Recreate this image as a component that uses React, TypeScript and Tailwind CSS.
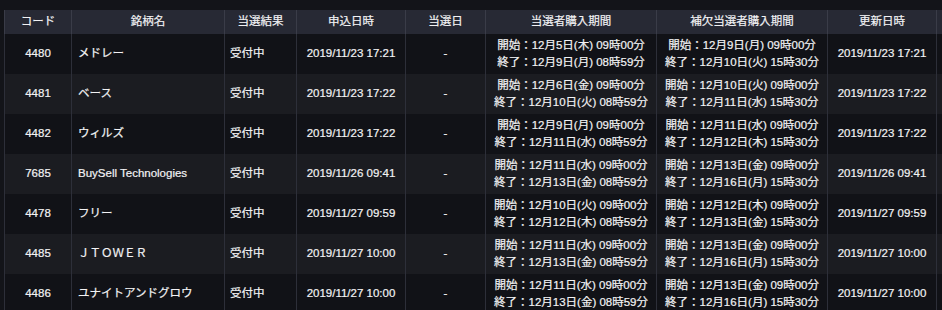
import React from 'react';

type Row = {
  code: string;
  name: string;
  status: string;
  applied: string;
  winDate: string;
  buy: [string, string];
  sub: [string, string];
  updated: string;
};

const rows: Row[] = [
  { code: '4480', name: 'メドレー', status: '受付中', applied: '2019/11/23 17:21', winDate: '-', buy: ['開始：12月5日(木) 09時00分', '終了：12月9日(月) 08時59分'], sub: ['開始：12月9日(月) 09時00分', '終了：12月10日(火) 15時30分'], updated: '2019/11/23 17:21' },
  { code: '4481', name: 'ベース', status: '受付中', applied: '2019/11/23 17:22', winDate: '-', buy: ['開始：12月6日(金) 09時00分', '終了：12月10日(火) 08時59分'], sub: ['開始：12月10日(火) 09時00分', '終了：12月11日(水) 15時30分'], updated: '2019/11/23 17:22' },
  { code: '4482', name: 'ウィルズ', status: '受付中', applied: '2019/11/23 17:22', winDate: '-', buy: ['開始：12月9日(月) 09時00分', '終了：12月11日(水) 08時59分'], sub: ['開始：12月11日(水) 09時00分', '終了：12月12日(木) 15時30分'], updated: '2019/11/23 17:22' },
  { code: '7685', name: 'BuySell Technologies', status: '受付中', applied: '2019/11/26 09:41', winDate: '-', buy: ['開始：12月11日(水) 09時00分', '終了：12月13日(金) 08時59分'], sub: ['開始：12月13日(金) 09時00分', '終了：12月16日(月) 15時30分'], updated: '2019/11/26 09:41' },
  { code: '4478', name: 'フリー', status: '受付中', applied: '2019/11/27 09:59', winDate: '-', buy: ['開始：12月10日(火) 09時00分', '終了：12月12日(木) 08時59分'], sub: ['開始：12月12日(木) 09時00分', '終了：12月13日(金) 15時30分'], updated: '2019/11/27 09:59' },
  { code: '4485', name: 'ＪＴＯＷＥＲ', status: '受付中', applied: '2019/11/27 10:00', winDate: '-', buy: ['開始：12月11日(水) 09時00分', '終了：12月13日(金) 08時59分'], sub: ['開始：12月13日(金) 09時00分', '終了：12月16日(月) 15時30分'], updated: '2019/11/27 10:00' },
  { code: '4486', name: 'ユナイトアンドグロウ', status: '受付中', applied: '2019/11/27 10:00', winDate: '-', buy: ['開始：12月11日(水) 09時00分', '終了：12月13日(金) 08時59分'], sub: ['開始：12月13日(金) 09時00分', '終了：12月16日(月) 15時30分'], updated: '2019/11/27 10:00' },
];

const headers = ['コード', '銘柄名', '当選結果', '申込日時', '当選日', '当選者購入期間', '補欠当選者購入期間', '更新日時', ''];
const widths = ['w-[67px]', 'w-[153px]', 'w-[72px]', 'w-[109px]', 'w-[80px]', 'w-[171px]', 'w-[171px]', 'w-[109px]', 'w-[60px]'];

const cell = 'border-x border-[#2d2f39] p-0';

export default function App() {
  return (
    <div
      className="w-[942px] h-[310px] overflow-hidden bg-[#131419] pt-[10px] pl-[4px] text-[#f2f2f4] text-[11.5px] font-normal [-webkit-text-stroke:0.2px_#f2f2f4]"
      style={{ fontFamily: '"Liberation Sans", "Noto Sans CJK JP", sans-serif' }}
    >
      <table className="table-fixed border-collapse w-[992px]">
        <colgroup>
          {widths.map((w, i) => (
            <col key={i} className={w} />
          ))}
        </colgroup>
        <thead>
          <tr className="bg-[#272934] h-[24px]">
            {headers.map((h, i) => (
              <th key={i} className="border-x border-[#3a3c48] text-center font-normal p-0 leading-none">
                {h}
              </th>
            ))}
          </tr>
        </thead>
        <tbody>
          {rows.map((r, i) => (
            <tr key={r.code + i} className={`h-[40px] ${i % 2 === 0 ? 'bg-[#111217]' : 'bg-[#1b1c21]'}`}>
              <td className={`${cell} text-center`}>{r.code}</td>
              <td className={`${cell} pl-[6px] whitespace-nowrap`}>{r.name}</td>
              <td className={`${cell} pl-[5px]`}>{r.status}</td>
              <td className={`${cell} text-center`}>{r.applied}</td>
              <td className={`${cell} text-center`}>{r.winDate}</td>
              <td className={`${cell} text-center leading-[17px] whitespace-nowrap`}>
                <div>{r.buy[0]}</div>
                <div>{r.buy[1]}</div>
              </td>
              <td className={`${cell} text-center leading-[17px] whitespace-nowrap`}>
                <div>{r.sub[0]}</div>
                <div>{r.sub[1]}</div>
              </td>
              <td className={`${cell} text-center`}>{r.updated}</td>
              <td className={cell}></td>
            </tr>
          ))}
        </tbody>
      </table>
    </div>
  );
}
